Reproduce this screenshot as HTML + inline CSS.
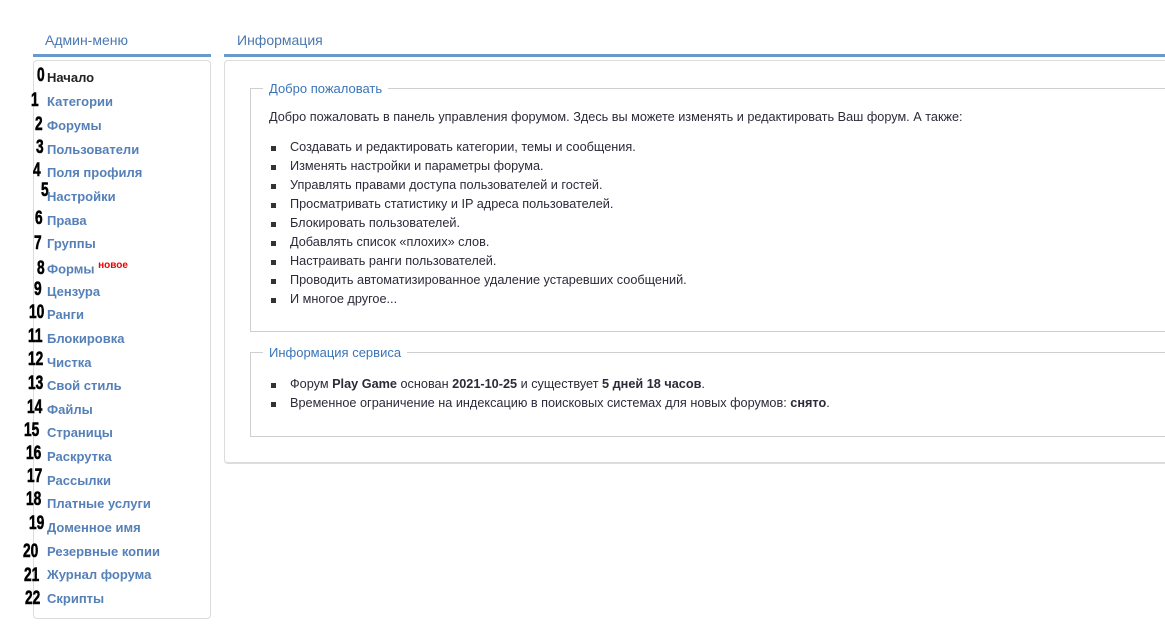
<!DOCTYPE html>
<html><head><meta charset="utf-8"><style>
body{margin:0;width:1165px;height:624px;background:#fff;font-family:"Liberation Sans",sans-serif;position:relative;overflow:hidden}
.hd{position:absolute;top:32px;font-size:14px;color:#4a78b0}
.ln{position:absolute;top:54px;height:3px;background:#6a98cc}
.box{position:absolute;border:1px solid #dcdcdc;border-radius:4px;background:#fff}
.mi{position:absolute;left:47px;font-size:13px;font-weight:bold;color:#5580b8;white-space:nowrap}
.n{position:absolute;font-family:"Liberation Sans Narrow","Liberation Sans",sans-serif;font-weight:bold;font-size:19px;color:#000;transform:scaleX(.72);transform-origin:left;-webkit-text-stroke:.6px #000}
fieldset{position:absolute;border:1px solid #cfcfcf;margin:0;padding:0}
legend{font-size:13px;color:#3a74b8;padding:0 6px;margin-left:12px}
.t{position:absolute;font-size:12.7px;color:#2b2b3a;white-space:nowrap}
ul{position:absolute;margin:0;padding:0;list-style:none;font-size:12.7px;color:#2b2b3a}
li{height:19px;line-height:19px;white-space:nowrap;position:relative;padding-left:21px}
li:before{content:"";position:absolute;left:2px;top:8px;width:5px;height:5px;background:#333}
</style></head><body>
<div class="hd" style="left:45px">Админ-меню</div>
<div class="hd" style="left:237px">Информация</div>
<div class="ln" style="left:33px;width:178px"></div>
<div class="ln" style="left:224px;width:941px"></div>
<div class="box" style="left:33px;top:60px;width:176px;height:557px"></div>
<div class="box" style="left:224px;top:60px;width:950px;height:401px;border-bottom:2px solid #ddd"></div>

<div class="n" style="left:37px;top:65px">0</div><div class="mi" style="top:70px;color:#222">Начало</div>
<div class="n" style="left:31px;top:90px">1</div><div class="mi" style="top:94px">Категории</div>
<div class="n" style="left:35px;top:114px">2</div><div class="mi" style="top:118px">Форумы</div>
<div class="n" style="left:36px;top:137px">3</div><div class="mi" style="top:142px">Пользователи</div>
<div class="n" style="left:33px;top:160px">4</div><div class="mi" style="top:165px">Поля профиля</div>
<div class="n" style="left:41px;top:180px">5</div><div class="mi" style="top:189px">Настройки</div>
<div class="n" style="left:35px;top:208px">6</div><div class="mi" style="top:213px">Права</div>
<div class="n" style="left:34px;top:233px">7</div><div class="mi" style="top:236px">Группы</div>
<div class="n" style="left:37px;top:258px">8</div><div class="mi" style="top:260px">Формы <sup style="color:#e00;font-size:10px">новое</sup></div>
<div class="n" style="left:34px;top:279px">9</div><div class="mi" style="top:284px">Цензура</div>
<div class="n" style="left:29px;top:302px">10</div><div class="mi" style="top:307px">Ранги</div>
<div class="n" style="left:28px;top:326px">11</div><div class="mi" style="top:331px">Блокировка</div>
<div class="n" style="left:28px;top:349px">12</div><div class="mi" style="top:355px">Чистка</div>
<div class="n" style="left:28px;top:373px">13</div><div class="mi" style="top:378px">Свой стиль</div>
<div class="n" style="left:27px;top:397px">14</div><div class="mi" style="top:402px">Файлы</div>
<div class="n" style="left:24px;top:420px">15</div><div class="mi" style="top:425px">Страницы</div>
<div class="n" style="left:26px;top:443px">16</div><div class="mi" style="top:449px">Раскрутка</div>
<div class="n" style="left:27px;top:466px">17</div><div class="mi" style="top:473px">Рассылки</div>
<div class="n" style="left:26px;top:489px">18</div><div class="mi" style="top:496px">Платные услуги</div>
<div class="n" style="left:29px;top:513px">19</div><div class="mi" style="top:520px">Доменное имя</div>
<div class="n" style="left:23px;top:541px">20</div><div class="mi" style="top:544px">Резервные копии</div>
<div class="n" style="left:24px;top:565px">21</div><div class="mi" style="top:567px">Журнал форума</div>
<div class="n" style="left:25px;top:588px">22</div><div class="mi" style="top:591px">Скрипты</div>

<fieldset style="left:250px;top:81px;width:930px;height:249px"><legend>Добро пожаловать</legend></fieldset>
<div class="t" style="left:269px;top:110px">Добро пожаловать в панель управления форумом. Здесь вы можете изменять и редактировать Ваш форум. А также:</div>
<ul style="left:269px;top:138px">
<li>Создавать и редактировать категории, темы и сообщения.</li>
<li>Изменять настройки и параметры форума.</li>
<li>Управлять правами доступа пользователей и гостей.</li>
<li>Просматривать статистику и IP адреса пользователей.</li>
<li>Блокировать пользователей.</li>
<li>Добавлять список «плохих» слов.</li>
<li>Настраивать ранги пользователей.</li>
<li>Проводить автоматизированное удаление устаревших сообщений.</li>
<li>И многое другое...</li>
</ul>
<fieldset style="left:250px;top:345px;width:930px;height:90px"><legend>Информация сервиса</legend></fieldset>
<ul style="left:269px;top:375px">
<li>Форум <b>Play Game</b> основан <b>2021-10-25</b> и существует <b>5 дней 18 часов</b>.</li>
<li>Временное ограничение на индексацию в поисковых системах для новых форумов: <b>снято</b>.</li>
</ul>
</body></html>
